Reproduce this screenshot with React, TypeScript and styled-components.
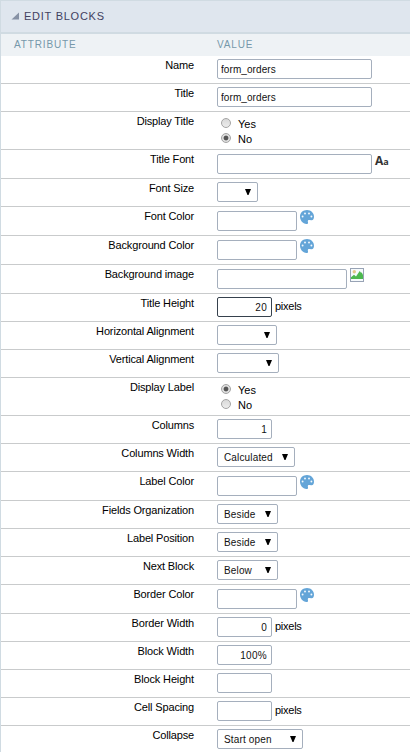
import React from 'react';
import styled, { createGlobalStyle } from 'styled-components';

const GlobalStyle = createGlobalStyle`
  *, *::before, *::after { box-sizing: border-box; }
  body {
    margin: 0;
    background: #fff;
    color: #000;
    font: 11px/14px Arial, "Liberation Sans", sans-serif;
    overflow: hidden;
  }
`;

const Panel = styled.main`
  height: 752px;
  overflow: hidden;
  border-top: 1px solid #d0dbe2;
  border-left: 1px solid #d0dbe2;
`;

const PanelHeader = styled.header`
  display: flex;
  align-items: center;
  gap: 5px;
  height: 33px;
  padding: 0 0 2px 10px;
  background: #dfe6ee;
  border-bottom: 2px solid #d0dbe2;
`;

const PanelTitle = styled.h1`
  margin: 0;
  font-size: 11px;
  font-weight: 400;
  line-height: 14px;
  letter-spacing: 0.75px;
  color: #42415f;
`;

const ColumnHeads = styled.div`
  display: grid;
  grid-template-columns: 203px 1fr;
  height: 22px;
  padding: 4px 0 0 13px;
  background: #eef2f5;
  color: #7698aa;
  font-size: 10px;
  letter-spacing: 0.85px;
`;

const Row = styled.div<{ $height: number }>`
  display: grid;
  grid-template-columns: 193px 1fr;
  column-gap: 23px;
  height: ${(p) => p.$height}px;
  border-bottom: 1px solid #c9cbcc;
`;

const Label = styled.div`
  padding-top: 2px;
  text-align: right;
  white-space: nowrap;
  letter-spacing: -0.15px;
`;

const Value = styled.div<{ $top: number }>`
  display: flex;
  align-items: flex-start;
  padding-top: ${(p) => p.$top}px;
`;

const TextField = styled.input<{ $width: number; $numeric?: boolean; $focused?: boolean }>`
  width: ${(p) => p.$width}px;
  height: 20px;
  margin: 0;
  padding: ${(p) => (p.$numeric ? '1px 4px 0 3px' : '1px 3px 0')};
  border: 1px solid ${(p) => (p.$focused ? '#36414d' : '#a5afbd')};
  border-radius: 2px;
  outline: none;
  background: #fff;
  color: #111;
  font: 10px "Liberation Sans", Arial, sans-serif;
  letter-spacing: ${(p) => (p.$numeric ? '0.3px' : '0.08px')};
  text-align: ${(p) => (p.$numeric ? 'right' : 'left')};
`;

const SelectBox = styled.button<{ $width: number }>`
  display: flex;
  align-items: center;
  justify-content: space-between;
  width: ${(p) => p.$width}px;
  height: 20px;
  margin: 0;
  padding: 0 6px;
  border: 1px solid #a5afbd;
  border-radius: 2px;
  background: #fff;
  color: #111;
  font: 10px "Liberation Sans", Arial, sans-serif;
  letter-spacing: 0.15px;
  white-space: nowrap;
`;

const SelectText = styled.span`
  padding-top: 1px;
`;

const Arrow = styled.svg`
  flex: none;
  display: block;
  margin-bottom: 1px;
`;

const Unit = styled.span`
  padding: 2px 0 0 3px;
  letter-spacing: -0.25px;
`;

const IconSlot = styled.span<{ $lift: number; $gap: number }>`
  display: block;
  margin: -${(p) => p.$lift}px 0 0 ${(p) => p.$gap}px;
  svg { display: block; }
`;

const FontGlyph = styled.span`
  display: block;
  padding-left: 3px;
  font: 700 12px/14px "Open Sans", sans-serif;
  color: #333;
  small { font-size: 9px; }
`;

const RadioGroup = styled.div`
  display: flex;
  flex-direction: column;
  padding-left: 4px;
`;

const RadioOption = styled.label`
  display: flex;
  align-items: flex-start;
  gap: 7px;
  height: 15px;
  line-height: 14px;
`;

const RadioDot = styled.span<{ $checked: boolean }>`
  width: 10px;
  height: 10px;
  margin-top: 1px;
  border: 1px solid #a4a4a4;
  border-radius: 50%;
  background: ${(p) =>
    p.$checked
      ? 'radial-gradient(circle, #555 0 2px, #dedede 2.8px)'
      : 'linear-gradient(#d9d9d9, #ececec)'};
`;

const Palette = () => (
  <IconSlot $lift={1} $gap={3}>
    <svg width="14" height="14" viewBox="0 0 14 14">
      <path
        d="M7 0C3 0 0 2.8 0 6.6C0 10.5 2.8 14 6.4 14C8 14 8.3 13 7.9 11.9C7.5 10.6 8.3 9.9 9.5 10.1L11.4 10.3C13.2 10.4 14 8.8 14 6.8C14 2.8 11 0 7 0Z"
        fill="#64a5d8"
      />
      <g fill="#f4f9fd">
        <circle cx="2.6" cy="6.5" r="0.95" />
        <circle cx="5" cy="3.5" r="0.95" />
        <circle cx="9" cy="3.5" r="0.95" />
        <circle cx="11.4" cy="6.5" r="0.95" />
      </g>
    </svg>
  </IconSlot>
);

const Picture = () => (
  <IconSlot $lift={1} $gap={3}>
    <svg width="14" height="14" viewBox="0 0 14 14">
      <rect x="0.5" y="0.5" width="13" height="13" fill="#f6fafc" stroke="#98a3b5" />
      <circle cx="4.3" cy="3.8" r="1.7" fill="#e3c78a" />
      <path d="M1 11V9.2L4 6.8L6 8.4L9.7 3L11 4.8L11.8 4.6L13 7V11Z" fill="#4db84f" />
    </svg>
  </IconSlot>
);

const Select = ({ width, text = '' }: { width: number; text?: string }) => (
  <SelectBox type="button" $width={width}>
    <SelectText>{text}</SelectText>
    <Arrow width="6" height="6" viewBox="0 0 6 6">
      <path d="M0 0H6L3.5 6H2.5Z" fill="#000" />
    </Arrow>
  </SelectBox>
);

type Extra = 'font' | 'palette' | 'picture' | 'pixels';

type Field =
  | { label: string; kind: 'text'; width: number; value?: string; numeric?: boolean; focused?: boolean; extra?: Extra }
  | { label: string; kind: 'select'; width: number; value?: string }
  | { label: string; kind: 'radio'; value: 'Yes' | 'No' };

const fields: Field[] = [
  { label: 'Name', kind: 'text', width: 155, value: 'form_orders' },
  { label: 'Title', kind: 'text', width: 155, value: 'form_orders' },
  { label: 'Display Title', kind: 'radio', value: 'No' },
  { label: 'Title Font', kind: 'text', width: 155, extra: 'font' },
  { label: 'Font Size', kind: 'select', width: 41 },
  { label: 'Font Color', kind: 'text', width: 80, extra: 'palette' },
  { label: 'Background Color', kind: 'text', width: 80, extra: 'palette' },
  { label: 'Background image', kind: 'text', width: 130, extra: 'picture' },
  { label: 'Title Height', kind: 'text', width: 55, value: '20', numeric: true, focused: true, extra: 'pixels' },
  { label: 'Horizontal Alignment', kind: 'select', width: 60 },
  { label: 'Vertical Alignment', kind: 'select', width: 62 },
  { label: 'Display Label', kind: 'radio', value: 'Yes' },
  { label: 'Columns', kind: 'text', width: 55, value: '1', numeric: true },
  { label: 'Columns Width', kind: 'select', width: 78, value: 'Calculated' },
  { label: 'Label Color', kind: 'text', width: 80, extra: 'palette' },
  { label: 'Fields Organization', kind: 'select', width: 61, value: 'Beside' },
  { label: 'Label Position', kind: 'select', width: 61, value: 'Beside' },
  { label: 'Next Block', kind: 'select', width: 61, value: 'Below' },
  { label: 'Border Color', kind: 'text', width: 80, extra: 'palette' },
  { label: 'Border Width', kind: 'text', width: 55, value: '0', numeric: true, extra: 'pixels' },
  { label: 'Block Width', kind: 'text', width: 55, value: '100%', numeric: true },
  { label: 'Block Height', kind: 'text', width: 55, numeric: true },
  { label: 'Cell Spacing', kind: 'text', width: 55, numeric: true, extra: 'pixels' },
  { label: 'Collapse', kind: 'select', width: 86, value: 'Start open' },
];

const extras: Record<Extra, React.ReactNode> = {
  font: <FontGlyph>A<small>a</small></FontGlyph>,
  palette: <Palette />,
  picture: <Picture />,
  pixels: <Unit>pixels</Unit>,
};

const FieldRow = ({ field }: { field: Field }) => {
  const hasIcon = field.kind === 'text' && !!field.extra && field.extra !== 'pixels';
  const height = field.kind === 'radio' ? 38 : hasIcon ? 29 : 28;
  const top = field.kind === 'radio' ? 5 : hasIcon ? 4 : 3;
  return (
    <Row $height={height}>
      <Label>{field.label}</Label>
      <Value $top={top}>
        {field.kind === 'text' && (
          <>
            <TextField
              $width={field.width}
              $numeric={field.numeric}
              $focused={field.focused}
              defaultValue={field.value}
              aria-label={field.label}
            />
            {field.extra && extras[field.extra]}
          </>
        )}
        {field.kind === 'select' && <Select width={field.width} text={field.value} />}
        {field.kind === 'radio' && (
          <RadioGroup>
            {['Yes', 'No'].map((option) => (
              <RadioOption key={option}>
                <RadioDot $checked={option === field.value} />
                <span>{option}</span>
              </RadioOption>
            ))}
          </RadioGroup>
        )}
      </Value>
    </Row>
  );
};

export default function App() {
  return (
    <>
      <GlobalStyle />
      <Panel>
        <PanelHeader>
          <svg width="8" height="8" viewBox="0 0 8 8">
            <path d="M8 0.5V7.5H0.5Z" fill="#8792a5" />
          </svg>
          <PanelTitle>EDIT BLOCKS</PanelTitle>
        </PanelHeader>
        <ColumnHeads>
          <span>ATTRIBUTE</span>
          <span>VALUE</span>
        </ColumnHeads>
        {fields.map((field) => (
          <FieldRow key={field.label} field={field} />
        ))}
      </Panel>
    </>
  );
}
